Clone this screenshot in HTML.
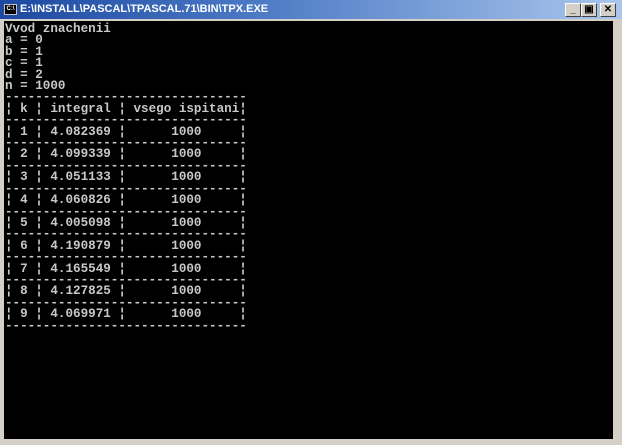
<!DOCTYPE html>
<html><head><style>
html,body{margin:0;padding:0;width:622px;height:445px;overflow:hidden;background:#d4d0c8;}
.win{position:absolute;left:0;top:0;width:622px;height:445px;background:#d4d0c8;}
.title{position:absolute;left:0;top:0;width:622px;height:19px;background:linear-gradient(90deg,#1c48a0,#4a78c4 40%,#aac6ec);}
.title .t{position:absolute;left:20px;top:3px;color:#fff;font:bold 11px "Liberation Sans",sans-serif;letter-spacing:0px;}
.ico{position:absolute;left:4px;top:4px;width:13px;height:11px;background:#000;border:1px solid #c0c0c0;box-sizing:border-box;color:#fff;font:bold 6px "Liberation Sans",sans-serif;line-height:9px;text-align:center;}
.btn{position:absolute;top:3px;width:16px;height:14px;background:#d4d0c8;box-sizing:border-box;border:1px solid;border-color:#fff #404040 #404040 #fff;font:bold 10px "Liberation Sans",sans-serif;text-align:center;line-height:12px;color:#000;}
.con{position:absolute;left:4px;top:21px;width:609px;height:418px;background:#000;}
pre{margin:0;position:absolute;left:1px;top:3px;color:#c8c8c8;font:bold 12.6px "Liberation Mono",monospace;line-height:11.4px;white-space:pre;}
</style></head><body><div class="win">
<div class="title"><div class="ico">C:\</div><div class="t">E:\INSTALL\PASCAL\TPASCAL.71\BIN\TPX.EXE</div>
<div class="btn" style="left:565px">_</div><div class="btn" style="left:581px">&#9635;</div><div class="btn" style="left:600px">✕</div></div>
<div class="con"><pre>Vvod znachenii
a = 0
b = 1
c = 1
d = 2
n = 1000
--------------------------------
¦ k ¦ integral ¦ vsego ispitani¦
--------------------------------
¦ 1 ¦ 4.082369 ¦      1000     ¦
--------------------------------
¦ 2 ¦ 4.099339 ¦      1000     ¦
--------------------------------
¦ 3 ¦ 4.051133 ¦      1000     ¦
--------------------------------
¦ 4 ¦ 4.060826 ¦      1000     ¦
--------------------------------
¦ 5 ¦ 4.005098 ¦      1000     ¦
--------------------------------
¦ 6 ¦ 4.190879 ¦      1000     ¦
--------------------------------
¦ 7 ¦ 4.165549 ¦      1000     ¦
--------------------------------
¦ 8 ¦ 4.127825 ¦      1000     ¦
--------------------------------
¦ 9 ¦ 4.069971 ¦      1000     ¦
--------------------------------</pre></div>
</div></body></html>
